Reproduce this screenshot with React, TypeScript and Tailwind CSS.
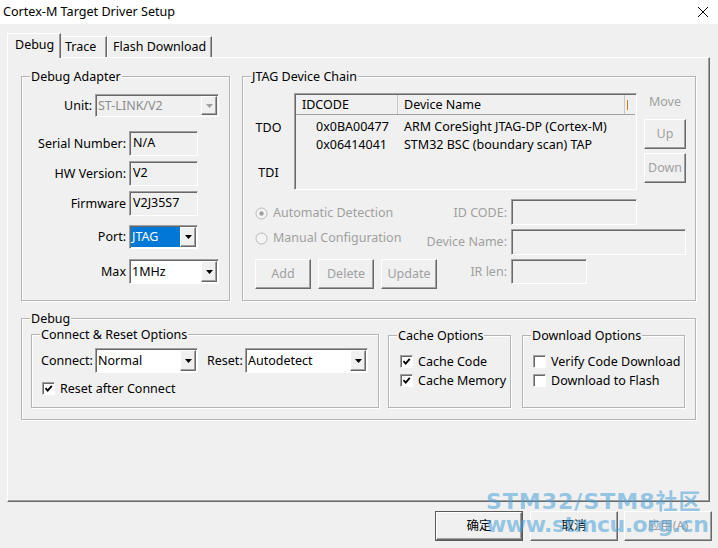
import React from "react";

// classic 3D edges
const raised =
  "border border-t-white border-l-white border-r-[#696969] border-b-[#696969] shadow-[inset_-1px_-1px_0_#a0a0a0]";
const sunken =
  "border border-t-[#a0a0a0] border-l-[#a0a0a0] border-r-white border-b-white shadow-[inset_1px_1px_0_#696969]";

function Arrow({ dim }: { dim?: boolean }) {
  return (
    <svg width="7" height="4" viewBox="0 0 7 4">
      <path d="M0 0h7L3.5 4z" fill={dim ? "#a0a0a0" : "#000"} />
    </svg>
  );
}

function Combo({
  className,
  value,
  selected,
  disabled,
}: {
  className: string;
  value: string;
  selected?: boolean;
  disabled?: boolean;
}) {
  return (
    <div
      className={`${className} ${sunken} flex p-[1px] ${
        disabled ? "bg-[#f0f0f0]" : "bg-white"
      }`}
    >
      <div className="flex-1 flex min-w-0">
        <span
          className={`flex items-center px-[1px] ${
            selected
              ? "flex-1 bg-[#0078d7] text-white"
              : disabled
              ? "text-[#8d8d8d]"
              : ""
          }`}
        >
          {value}
        </span>
      </div>
      <div
        className={`w-[16px] flex items-center justify-center bg-[#f0f0f0] ${raised}`}
      >
        <Arrow dim={disabled} />
      </div>
    </div>
  );
}

function Field({ className, value }: { className: string; value?: string }) {
  return (
    <div className={`${className} ${sunken} flex items-center pl-[3px] pb-[1px]`}>
      {value}
    </div>
  );
}

function Button({
  className,
  children,
  disabled,
}: {
  className: string;
  children: React.ReactNode;
  disabled?: boolean;
}) {
  return (
    <div
      className={`${className} ${raised} bg-[#f0f0f0] flex items-center justify-center ${
        disabled ? "text-[#a0a0a0]" : ""
      }`}
    >
      {children}
    </div>
  );
}

function Check({ checked }: { checked?: boolean }) {
  return (
    <div
      className={`w-[13px] h-[13px] shrink-0 bg-white ${sunken} flex items-center justify-center`}
    >
      {checked && (
        <svg width="9" height="9" viewBox="0 0 9 9">
          <path d="M1.5 4.2l2.2 2.4L7.8 1.8" stroke="#000" strokeWidth="1.9" fill="none" />
        </svg>
      )}
    </div>
  );
}

function Radio({ on }: { on?: boolean }) {
  return (
    <svg width="13" height="13" viewBox="0 0 13 13" className="shrink-0">
      <circle cx="6.5" cy="6.5" r="5.5" fill="#f4f4f4" stroke="#b9b9b9" />
      {on && <circle cx="6.5" cy="6.5" r="2.2" fill="#a0a0a0" />}
    </svg>
  );
}

function Group({
  title,
  className,
  children,
}: {
  title: string;
  className: string;
  children?: React.ReactNode;
}) {
  return (
    <div
      className={`relative border border-[#b4b4b4] shadow-[inset_1px_1px_0_#fff,1px_1px_0_#fff] ${className}`}
    >
      <span className="absolute left-[8px] -top-[8px] px-[1px] bg-[#f0f0f0] leading-[16px] whitespace-nowrap">
        {title}
      </span>
      {children}
    </div>
  );
}

function CheckRow({ label, checked }: { label: string; checked?: boolean }) {
  return (
    <div className="flex items-center gap-[5px] h-[19px] whitespace-nowrap">
      <Check checked={checked} />
      <span>{label}</span>
    </div>
  );
}

export default function App() {
  return (
    <div className="relative w-[718px] h-[548px] overflow-hidden bg-[#f0f0f0] text-[12.5px] leading-[16px] text-black font-['Noto_Sans','Noto_Sans_CJK_SC',sans-serif]">
      {/* title bar */}
      <div className="h-[24px] bg-white flex items-center justify-between pl-[3px] pr-[10px]">
        <span className="text-[12.6px]">Cortex-M Target Driver Setup</span>
        <svg width="10" height="10" viewBox="0 0 10 10">
          <path d="M0 0L10 10M10 0L0 10" stroke="#000" strokeWidth="1" />
        </svg>
      </div>

      <div className="pl-[7px] pt-[9px]">
        {/* tabs */}
        <div className="relative z-10 flex items-end h-[24px]">
          <div className="w-[54px] h-[25px] -mb-[1px] bg-[#f0f0f0] border-t border-l border-t-white border-l-white border-r border-r-[#696969] shadow-[inset_-1px_0_0_#a0a0a0] pl-[7px] pt-[3px]">
            Debug
          </div>
          <div className="w-[46px] h-[21px] border-t border-t-white border-r border-r-[#696969] shadow-[inset_-1px_0_0_#a0a0a0] pl-[4px] pt-[2px]">
            Trace
          </div>
          <div className="w-[105px] h-[21px] border-t border-l border-t-white border-l-white border-r border-r-[#696969] shadow-[inset_-1px_0_0_#a0a0a0] pl-[5px] pt-[2px]">
            Flash Download
          </div>
        </div>

        {/* tab page */}
        <div className="w-[703px] h-[445px] border border-t-white border-l-white border-r-[#696969] border-b-[#696969] shadow-[inset_-1px_-1px_0_#a0a0a0] pl-[13px] pt-[18px]">
          <div className="flex gap-[12px]">
            <Group title="Debug Adapter" className="w-[209px] h-[225px] pt-[17px]">
              <div className="flex items-center">
                <span className="w-[70px] text-right">Unit:</span>
                <Combo className="ml-[3px] w-[124px] h-[23px]" value="ST-LINK/V2" disabled />
              </div>
              <div className="flex items-center mt-[14px]">
                <span className="w-[104px] text-right">Serial Number:</span>
                <Field className="ml-[3px] w-[69px] h-[25px]" value="N/A" />
              </div>
              <div className="flex items-center mt-[5px]">
                <span className="w-[104px] text-right">HW Version:</span>
                <Field className="ml-[3px] w-[69px] h-[25px]" value="V2" />
              </div>
              <div className="flex items-center mt-[5px]">
                <span className="w-[104px] text-right">Firmware</span>
                <Field className="ml-[3px] w-[69px] h-[25px]" value="V2J35S7" />
              </div>
              <div className="flex items-center mt-[9px]">
                <span className="w-[104px] text-right">Port:</span>
                <Combo className="ml-[3px] w-[69px] h-[24px]" value="JTAG" selected />
              </div>
              <div className="flex items-center mt-[10px]">
                <span className="w-[104px] text-right">Max</span>
                <Combo className="ml-[3px] w-[90px] h-[25px]" value="1MHz" />
              </div>
            </Group>

            <Group title="JTAG Device Chain" className="w-[454px] h-[225px] pt-[16px]">
              <div className="flex">
                <div className="w-[51px] flex flex-col items-center pt-[27px]">
                  <span>TDO</span>
                  <span className="mt-[29px]">TDI</span>
                </div>
                <div className={`w-[343px] h-[97px] ${sunken} p-[1px] overflow-hidden`}>
                  <div className="flex h-[20px] border-b border-[#a0a0a0] whitespace-nowrap">
                    <div className="w-[102px] pl-[6px] flex items-center border-r border-[#c8c8c8]">
                      IDCODE
                    </div>
                    <div className="w-[227px] pl-[6px] flex items-center border-r border-[#c8c8c8]">
                      Device Name
                    </div>
                    <div className="flex-1 pl-[2px] flex items-center">
                      <span className="w-[1px] h-[10px] bg-[#c87a20]" />
                    </div>
                  </div>
                  <div className="pt-[3px] whitespace-nowrap">
                    <div className="flex h-[18px] items-center">
                      <span className="w-[102px] pl-[20px]">0x0BA00477</span>
                      <span className="pl-[6px]">ARM CoreSight JTAG-DP (Cortex-M)</span>
                    </div>
                    <div className="flex h-[18px] items-center">
                      <span className="w-[102px] pl-[20px]">0x06414041</span>
                      <span className="pl-[6px]">STM32 BSC (boundary scan) TAP</span>
                    </div>
                  </div>
                </div>
                <div className="ml-[7px] w-[42px] flex flex-col">
                  <span className="mt-[1px] text-center text-[#a0a0a0]">Move</span>
                  <Button className="mt-[9px] h-[30px]" disabled>
                    Up
                  </Button>
                  <Button className="mt-[4px] h-[30px]" disabled>
                    Down
                  </Button>
                </div>
              </div>

              <div className="flex items-center mt-[9px] pl-[12px] pr-[9px] h-[26px] text-[#a0a0a0] whitespace-nowrap">
                <div className="w-[150px] self-start mt-[6px] flex items-center gap-[5px]">
                  <Radio on />
                  <span>Automatic Detection</span>
                </div>
                <span className="flex-1 text-right pr-[4px] pt-[2px]">ID CODE:</span>
                <div className="w-[175px]">
                  <Field className="w-[126px] h-[26px]" />
                </div>
              </div>
              <div className="flex items-center mt-[4px] pl-[12px] pr-[9px] h-[26px] text-[#a0a0a0] whitespace-nowrap">
                <div className="w-[150px] self-start mt-[1px] flex items-center gap-[5px]">
                  <Radio />
                  <span>Manual Configuration</span>
                </div>
                <span className="flex-1 text-right pr-[4px]">Device Name:</span>
                <div className="w-[175px]">
                  <Field className="w-[175px] h-[26px]" />
                </div>
              </div>
              <div className="flex items-start mt-[4px] pl-[12px] pr-[9px] text-[#a0a0a0] whitespace-nowrap">
                <div className="w-[182px] flex gap-[7px]">
                  <Button className="w-[56px] h-[30px]" disabled>
                    Add
                  </Button>
                  <Button className="w-[56px] h-[30px]" disabled>
                    Delete
                  </Button>
                  <Button className="w-[56px] h-[30px]" disabled>
                    Update
                  </Button>
                </div>
                <span className="flex-1 h-[25px] flex items-center justify-end pr-[4px]">IR len:</span>
                <div className="w-[175px]">
                  <Field className="w-[76px] h-[25px]" />
                </div>
              </div>
            </Group>
          </div>

          <Group title="Debug" className="mt-[17px] w-[675px] h-[102px] pt-[15px] pl-[9px] flex items-start">
            <Group title="Connect & Reset Options" className="w-[348px] h-[74px] pt-[13px] pl-[9px]">
              <div className="flex items-center">
                <span className="w-[54px]">Connect:</span>
                <Combo className="w-[103px] h-[25px]" value="Normal" />
                <span className="ml-[9px] w-[38px]">Reset:</span>
                <Combo className="w-[123px] h-[25px]" value="Autodetect" />
              </div>
              <div className="mt-[6px] pl-[1px]">
                <CheckRow label="Reset after Connect" checked />
              </div>
            </Group>
            <Group title="Cache Options" className="ml-[9px] mt-[1px] w-[123px] h-[73px] pt-[16px] pl-[11px]">
              <CheckRow label="Cache Code" checked />
              <CheckRow label="Cache Memory" checked />
            </Group>
            <Group title="Download Options" className="ml-[11px] mt-[1px] w-[163px] h-[73px] pt-[16px] pl-[10px]">
              <CheckRow label="Verify Code Download" />
              <CheckRow label="Download to Flash" />
            </Group>
          </Group>
        </div>
      </div>

      {/* dialog buttons */}
      <div className="flex justify-end pr-[6px] mt-[9px]">
        <div className="w-[88px] h-[30px] border border-[#5a5a5a] flex">
          <div className={`flex-1 ${raised} bg-[#f0f0f0] flex items-center justify-center`}>确定</div>
        </div>
        <Button className="ml-[7px] w-[88px] h-[30px]">取消</Button>
        <Button className="ml-[6px] w-[88px] h-[30px]" disabled>
          应用(A)
        </Button>
      </div>

      {/* site watermark */}
      <div className="absolute left-[486px] top-[490px] leading-[23px] text-[22px] font-bold text-[rgba(70,160,215,0.55)] font-['DejaVu_Sans','Noto_Sans_CJK_SC',sans-serif] pointer-events-none whitespace-nowrap">
        <div className="tracking-[1px]">STM32/STM8社区</div>
        <div className="tracking-[-0.5px]">www.stmcu.org.cn</div>
      </div>
    </div>
  );
}
